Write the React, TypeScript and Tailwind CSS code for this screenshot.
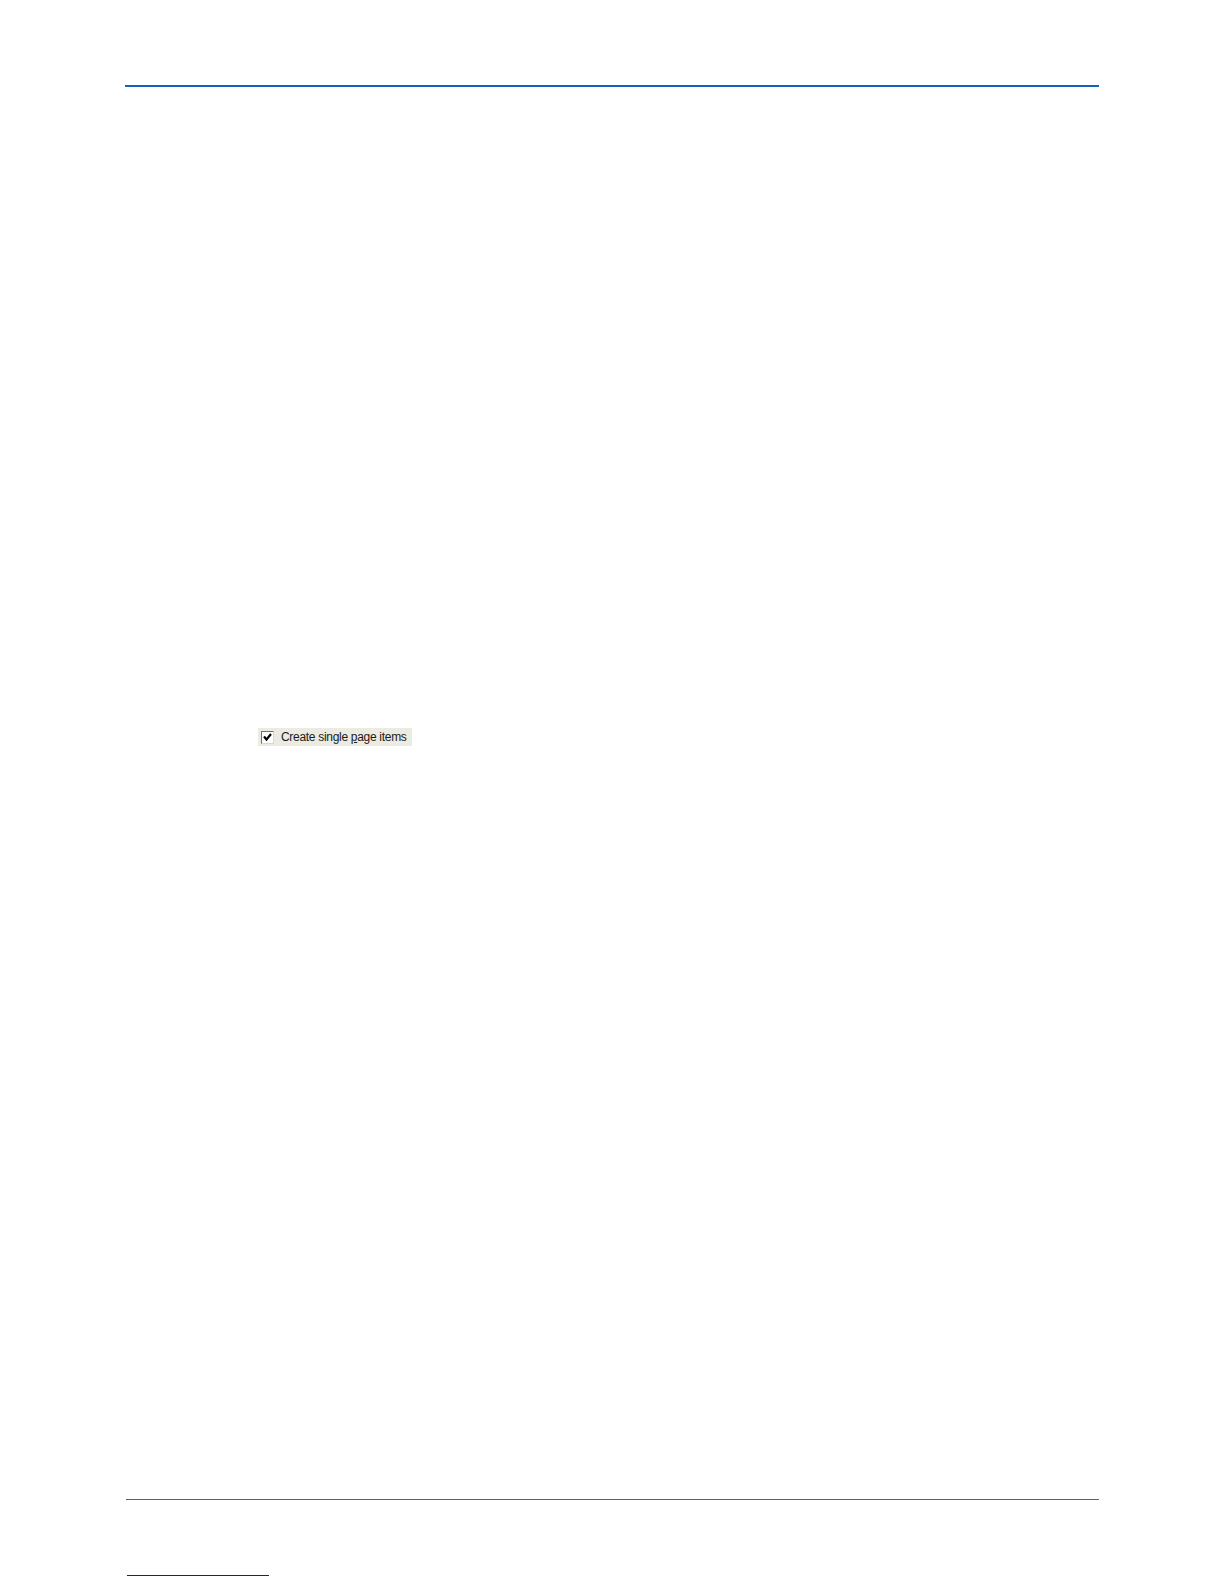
export default function App() {
  return (
    <div className="relative w-[1224px] h-[1584px] bg-white flex flex-col" style={{ fontFamily: '"Liberation Sans", Arial, sans-serif' }}>
      {/* header rule */}
      <div className="mt-[85px] mx-[125px] h-[2px] bg-[#1560bd]" />

      {/* dialog snippet */}
      <div className="mt-[641px] ml-[258px] w-[154px] h-[18px] bg-[#ecebe2] flex items-center">
        <div className="ml-[3px] w-[13px] h-[13px] bg-white border border-t-[#6e6e6e] border-l-[#6e6e6e] border-b-[#d8d8d0] border-r-[#d8d8d0] flex items-center justify-center">
          <svg width="9" height="9" viewBox="0 0 9 9">
            <path d="M1 3.5 L3.5 6.5 L8 1" fill="none" stroke="#000" strokeWidth="2.2" />
          </svg>
        </div>
        <span className="ml-[7px] text-[12px] leading-none text-[#1a1a1a] tracking-[-0.3px]">
          Create single <span className="underline">p</span>age items
        </span>
      </div>

      {/* footer rule */}
      <div className="mt-[753px] ml-[126px] mr-[125px] h-px bg-[#2b6cc4]" />

      {/* footnote rule */}
      <div className="mt-[75px] ml-[127px] w-[142px] h-px bg-[#1a1a8c]" />
    </div>
  );
}
